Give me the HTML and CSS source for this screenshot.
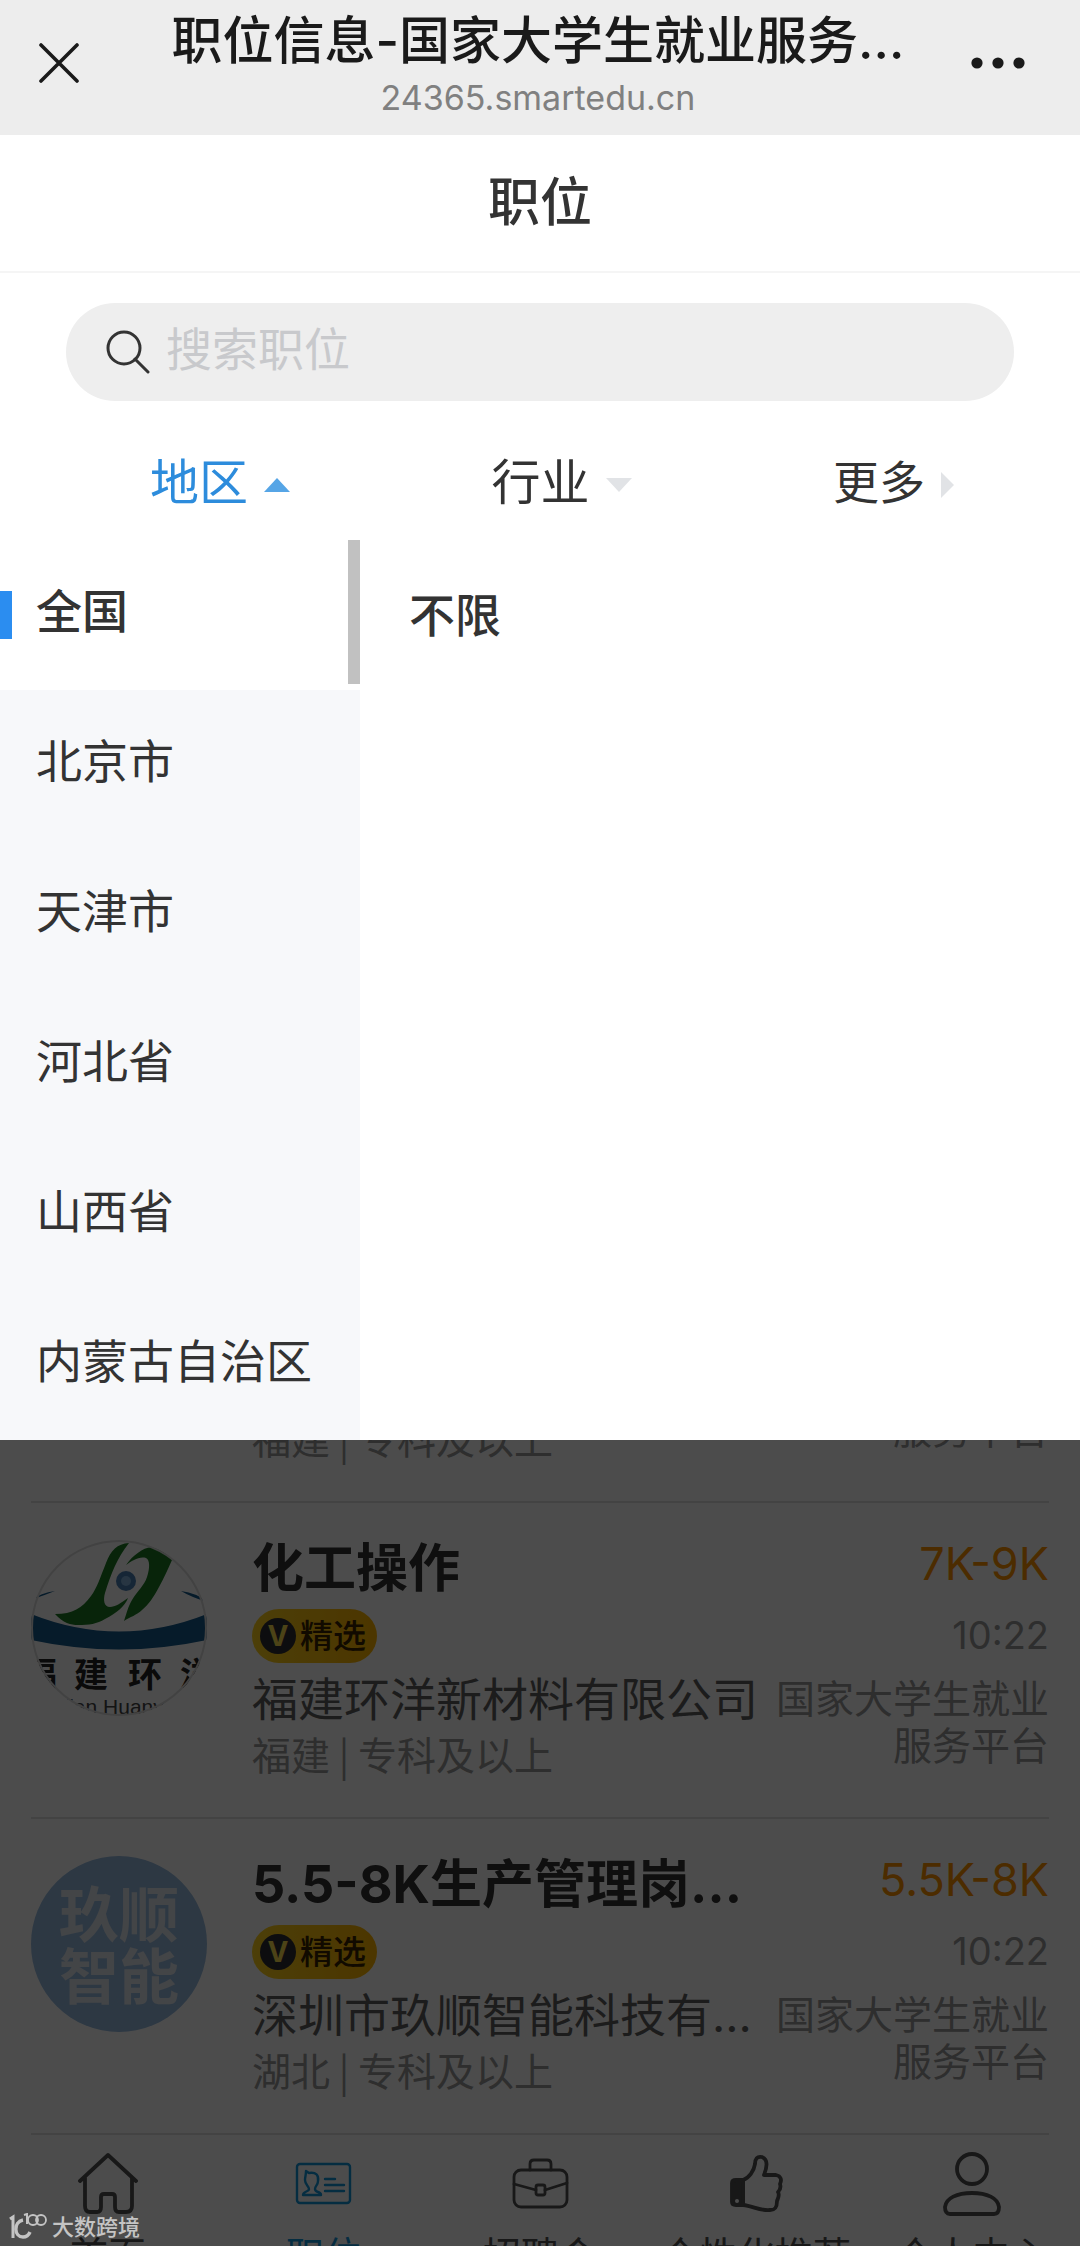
FILE: index.html
```
<!DOCTYPE html>
<html lang="zh-CN">
<head>
    <meta charset="UTF-8">
    <meta name="viewport" content="width=device-width, initial-scale=1.0">
    <title>职位信息</title>
    <link rel="stylesheet" href="styles.css">
</head>
<body>
<div class="page">
    <!-- 浏览器顶栏 -->
    <header class="topbar">
        <button class="icon-button" type="button" aria-label="关闭">
            <svg width="40" height="40" viewBox="0 0 40 40" fill="none" stroke="#1a1a1a" stroke-width="3.6" stroke-linecap="round"><path d="M2 2L38 38M38 2L2 38"/></svg>
        </button>
        <div class="topbar-text">
            <h1>职位信息-国家大学生就业服务…</h1>
            <p>24365.smartedu.cn</p>
        </div>
        <button class="icon-button" type="button" aria-label="更多操作">
            <svg width="54" height="14" viewBox="0 0 54 14" fill="#1a1a1a"><circle cx="6" cy="7" r="5.6"/><circle cx="27" cy="7" r="5.6"/><circle cx="48" cy="7" r="5.6"/></svg>
        </button>
    </header>

    <h2 class="page-title">职位</h2>

    <!-- 搜索 -->
    <form class="search">
        <label for="keyword" aria-label="搜索职位">
            <svg width="44" height="44" viewBox="0 0 44 44" fill="none" stroke="#333" stroke-width="3"><circle cx="18" cy="18" r="16"/><path d="M29 29L42 42" stroke-linecap="round"/></svg>
        </label>
        <input type="text" id="keyword" placeholder="搜索职位">
    </form>

    <!-- 筛选条件 -->
    <div class="filters">
        <button class="filter active" type="button">地区<svg width="26" height="14" viewBox="0 0 26 14"><path d="M0 14L13 0L26 14Z"/></svg></button>
        <button class="filter" type="button">行业<svg width="26" height="14" viewBox="0 0 26 14"><path d="M0 0L13 14L26 0Z"/></svg></button>
        <button class="filter more" type="button">更多<svg width="13" height="26" viewBox="0 0 13 26"><path d="M0 0L13 13L0 26Z"/></svg></button>
    </div>

    <!-- 地区选择 -->
    <div class="dropdown">
        <div class="regions">
            <button class="region selected" type="button">全国</button>
            <button class="region" type="button">北京市</button>
            <button class="region" type="button">天津市</button>
            <button class="region" type="button">河北省</button>
            <button class="region" type="button">山西省</button>
            <button class="region" type="button">内蒙古自治区</button>
            <div class="scroll-thumb"></div>
        </div>
        <div class="cities">
            <button class="city" type="button">不限</button>
        </div>
    </div>

    <!-- 遮罩下的内容 -->
    <div class="behind">
        <main class="jobs">
            <article class="job cut">
                <div class="job-main">
                    <p class="meta">福建 | 专科及以上</p>
                </div>
                <div class="job-side">
                    <p class="platform">服务平台</p>
                </div>
            </article>

            <article class="job">
                <svg class="logo" viewBox="0 0 176 176">
                    <clipPath id="round"><circle cx="88" cy="88" r="88"/></clipPath>
                    <g clip-path="url(#round)">
                        <rect width="176" height="176" fill="#fff"/>
                        <path d="M0 74Q88 109 176 74V100Q88 119 0 100Z" fill="#155a8c"/>
                        <path d="M0 60Q10 53 24 51Q14 55 5 58ZM176 62Q166 53 150 51Q160 57 176 62Z" fill="#155a8c"/>
                        <path d="M98 3C86 4 80 10 75 23C69 38 66 48 60 56C51 68 42 74 24 74C32 83 40 85 47 85C58 85 66 84 74 79C86 73 94 66 97 58C90 63 84 67 79 67C73 67 72 60 74 53C80 34 86 18 98 3Z" fill="#1c7a24"/>
                        <path d="M95 25C102 15 112 8 120 7C129 9 136 14 141 20C137 29 133 38 128 47C122 58 118 64 111 70C106 75 99 77 93 81C96 72 97 67 101 60C107 50 113 46 116 37C119 28 119 20 115 18C108 16 101 21 95 25Z" fill="#1c7a24"/>
                        <circle cx="95" cy="41" r="10" fill="#4a7fb5"/>
                        <circle cx="95" cy="41" r="5" fill="#82b3dc"/>
                        <g class="logo-name"><text x="-8" y="147">福</text><text x="43" y="147">建</text><text x="97" y="147">环</text><text x="149" y="147">洋</text></g>
                        <text class="logo-latin" x="9" y="174">Fujian Huanyang</text>
                    </g>
                    <circle cx="88" cy="88" r="87" fill="none" stroke="#ddd" stroke-width="2"/>
                </svg>
                <div class="job-main">
                    <h3>化工操作</h3>
                    <span class="badge"><b>V</b>精选</span>
                    <p class="company">福建环洋新材料有限公司</p>
                    <p class="meta">福建 | 专科及以上</p>
                </div>
                <div class="job-side">
                    <p class="salary">7K-9K</p>
                    <p class="time">10:22</p>
                    <p class="platform">国家大学生就业服务平台</p>
                </div>
            </article>

            <article class="job">
                <div class="logo logo-blue">玖顺<br>智能</div>
                <div class="job-main">
                    <h3>5.5-8K生产管理岗…</h3>
                    <span class="badge"><b>V</b>精选</span>
                    <p class="company">深圳市玖顺智能科技有…</p>
                    <p class="meta">湖北 | 专科及以上</p>
                </div>
                <div class="job-side">
                    <p class="salary">5.5K-8K</p>
                    <p class="time">10:22</p>
                    <p class="platform">国家大学生就业服务平台</p>
                </div>
            </article>
        </main>

        <!-- 底部导航 -->
        <nav class="tabbar">
            <a href="#">
                <svg width="60" height="64" viewBox="0 0 60 64"><path d="M2 29L30 3L58 29M7 26V54Q7 60 12 60H19Q23 60 23 55V45Q23 42 26 42H34Q37 42 37 45V55Q37 60 41 60H48Q54 60 54 54V26"/></svg>
                首页
            </a>
            <a class="current" href="#">
                <svg width="60" height="64" viewBox="0 0 60 64"><g stroke-width="2.4"><rect x="3" y="12" width="53" height="39" rx="3"/><path d="M12 19L15 21C22 20 25 23 24 29C24 33 21 34 21 37C21 41 27 39 27 43H9C9 39 15 40 15 37C15 34 11 33 11 28C11 25 12 23 12 19ZM31 27H41M31 33H50M31 39H50"/></g></svg>
                职位
            </a>
            <a href="#">
                <svg width="60" height="64" viewBox="0 0 60 64"><g stroke-width="2.8"><rect x="4" y="18" width="53" height="37" rx="7"/><path d="M20 18V12Q20 8 24 8H37Q41 8 41 12V18M4 32L26 38M35 38L57 31"/><rect x="26" y="33" width="9" height="10" rx="2"/></g></svg>
                招聘会
            </a>
            <a href="#">
                <svg width="60" height="64" viewBox="0 0 60 64"><path d="M17 28C23 26 28 19 29 12C29 7 31 4 36 5C41 7 42 13 38 23H50C55 24 56 28 54 32C55 35 54 38 52 40C54 43 52 46 51 49C51 56 49 58 44 58C34 59 27 54 17 53Z"/><path class="solid" d="M10 28H17V53H10Q6 53 6 50V31Q6 28 10 28Z"/><circle cx="11" cy="49" r="2" fill="#fff" stroke="none"/></svg>
                个性化推荐
            </a>
            <a href="#">
                <svg width="60" height="64" viewBox="0 0 60 64"><ellipse cx="30" cy="17" rx="15" ry="15"/><path d="M3 55C4 46 15 41 30 41C45 41 56 46 57 55Q57 62 52 62H8Q3 62 3 55Z"/></svg>
                个人中心
            </a>
        </nav>
        <div class="mask"></div>
    </div>

    <div class="watermark">
        <svg width="38" height="28" viewBox="0 0 38 28" fill="none" stroke="#c4c4c4"><path d="M1 6L4 4V25" stroke-width="3"/><path d="M14 7C4 9 5 24 14 24Q19 24 21 19" stroke-width="3.4"/><path d="M15 2L18 1V11" stroke-width="2"/><circle cx="24" cy="7" r="5" stroke-width="1.8"/><circle cx="32" cy="7" r="5" stroke-width="1.8"/></svg>
        大数跨境
    </div>
</div>
</body>
</html>
```
FILE: styles.css
```
* {
    box-sizing: border-box;
}

body {
    margin: 0;
    font-family: Inter, "Noto Sans CJK SC", sans-serif;
    color: #333;
    background-color: #fff;
}

h1, h2, h3, p {
    margin: 0;
    font-weight: 500;
}

button {
    padding: 0;
    border: none;
    background: none;
    font: inherit;
    color: inherit;
    text-align: left;
    cursor: pointer;
}

svg {
    display: block;
    flex: none;
}

.page {
    position: relative;
    display: flex;
    flex-direction: column;
    height: 100vh;
    overflow: hidden;
}

/* 浏览器顶栏 */
.topbar {
    flex: none;
    display: flex;
    justify-content: space-between;
    padding: 11px 42px 20px 38px;
    height: 135px;
    background-color: #ededed;
}

.icon-button {
    align-self: center;
    width: 68px;
    padding-left: 1px;
}

.topbar-text {
    text-align: center;
    white-space: nowrap;
}

.topbar-text h1 {
    font-size: 51px;
    line-height: 60px;
    color: #1a1a1a;
}

.topbar-text p {
    font-size: 34px;
    line-height: 54px;
    font-weight: 400;
    color: #808080;
}

.page-title {
    flex: none;
    padding: 34px 0;
    border-bottom: 2px solid #f5f5f5;
    font-size: 52px;
    line-height: 68px;
    text-align: center;
}

/* 搜索 */
.search {
    flex: none;
    display: flex;
    align-items: center;
    gap: 16px;
    height: 98px;
    margin: 30px 66px 0;
    padding: 0 40px;
    border-radius: 49px;
    background-color: #eee;
}

.search input {
    flex: 1;
    min-width: 0;
    padding: 0 0 6px;
    border: none;
    outline: none;
    background: none;
    font: inherit;
    font-size: 46px;
    line-height: 60px;
}

.search input::placeholder {
    color: #c8c9cc;
}

/* 筛选条件 */
.filters {
    flex: none;
    display: flex;
    justify-content: space-between;
    padding: 48px 126px 24px 150px;
}

.filter {
    display: flex;
    align-items: center;
    gap: 16px;
    font-size: 49px;
    line-height: 67px;
    fill: #e1e3e6;
}

.filter svg {
    margin-top: 4px;
}

.filter.more {
    font-size: 46px;
}

.filter.active {
    color: #2d8cdc;
    fill: #56a5e6;
}

/* 地区选择 */
.dropdown {
    flex: none;
    display: flex;
}

.regions {
    position: relative;
    display: flex;
    flex-direction: column;
    width: 33.33%;
    background-color: #f7f8fa;
}

.region,
.city {
    display: flex;
    align-items: center;
    height: 150px;
    padding-bottom: 8px;
    font-size: 46px;
    line-height: 60px;
}

.region {
    padding-left: 36px;
}

.region.selected {
    gap: 24px;
    padding-left: 0;
    background-color: #fff;
    font-weight: 500;
}

.region.selected::before {
    content: "";
    width: 12px;
    height: 48px;
    margin-top: 8px;
    background-color: #2b8df0;
}

.scroll-thumb {
    position: absolute;
    top: 0;
    right: 0;
    width: 12px;
    height: 144px;
    background-color: #c1c1c1;
}

.cities {
    flex: 1;
    padding: 4px 49px 0;
}

.city {
    font-weight: 500;
}

/* 遮罩下的内容 */
.behind {
    position: relative;
    flex: 1;
    display: flex;
    flex-direction: column;
    min-height: 0;
}

.mask {
    position: absolute;
    inset: 0;
    background-color: rgba(0, 0, 0, 0.7);
}

.jobs {
    flex: 1;
    display: flex;
    flex-direction: column;
    justify-content: flex-end;
    min-height: 0;
    padding: 0 31px;
    overflow: hidden;
}

.job {
    flex: none;
    display: flex;
    padding: 36px 0 37px;
    border-bottom: 2px solid #e0e0e0;
}

.job.cut {
    align-items: flex-end;
    padding-left: 176px;
}

.logo {
    flex: none;
    width: 176px;
    height: 176px;
    margin-top: 1px;
}

.logo-name {
    font-size: 34px;
    font-weight: 700;
    fill: #222;
}

.logo-latin {
    font-family: "Liberation Sans", sans-serif;
    font-size: 21px;
    fill: #444;
}

.logo-blue {
    padding-top: 28px;
    border-radius: 50%;
    background-color: #97bbe0;
    font-size: 60px;
    line-height: 62px;
    font-weight: 700;
    text-align: center;
    color: #e0e6ee;
}

.job-main {
    flex: 1;
    min-width: 0;
    padding: 0 0 4px 45px;
    white-space: nowrap;
}

.job-main h3 {
    font-size: 52px;
    line-height: 60px;
    font-weight: 700;
}

.badge {
    display: flex;
    align-items: center;
    gap: 4px;
    width: 125px;
    height: 54px;
    margin: 10px 0 6px;
    padding-left: 8px;
    border-radius: 27px;
    background: linear-gradient(90deg, #ffd21e, #ffb400);
    font-size: 33px;
    line-height: 50px;
    font-weight: 500;
    color: #3a2400;
}

.badge b {
    width: 36px;
    height: 36px;
    border-radius: 50%;
    background-color: #2c2c34;
    font-size: 28px;
    line-height: 36px;
    text-align: center;
    color: #ffe14d;
}

.company {
    font-size: 46px;
    line-height: 60px;
    font-weight: 400;
    color: #606060;
}

.meta {
    margin-top: 1px;
    font-family: "Noto Sans CJK SC", sans-serif;
    font-size: 39px;
    line-height: 46px;
    font-weight: 400;
    color: #999;
}

.job-side {
    flex: none;
    width: 280px;
    padding-bottom: 11px;
    text-align: right;
    color: #999;
}

.salary {
    font-size: 45px;
    line-height: 50px;
    font-weight: 400;
    color: #ff9500;
}

.time {
    margin: 23px 0 17px;
    font-size: 38px;
    line-height: 46px;
    font-weight: 400;
}

.platform {
    font-size: 39px;
    line-height: 47px;
    font-weight: 400;
}

/* 底部导航 */
.tabbar {
    flex: none;
    display: flex;
    height: 111px;
    padding-top: 17px;
    overflow: hidden;
}

.tabbar a {
    flex: 1 0 0;
    display: flex;
    flex-direction: column;
    align-items: center;
    gap: 16px;
    font-size: 38px;
    line-height: 46px;
    white-space: nowrap;
    text-decoration: none;
    color: #505050;
}

.tabbar svg {
    fill: none;
    stroke: #505050;
    stroke-width: 3.8;
    stroke-linejoin: round;
    stroke-linecap: round;
}

.tabbar .solid {
    fill: #505050;
}

.tabbar .current {
    color: #1296db;
}

.tabbar .current svg {
    stroke: #1296db;
}

/* 水印 */
.watermark {
    position: absolute;
    left: 9px;
    bottom: 4px;
    display: flex;
    align-items: center;
    gap: 5px;
    font-size: 22px;
    line-height: 30px;
    font-weight: 500;
    color: #c4c4c4;
}
```
